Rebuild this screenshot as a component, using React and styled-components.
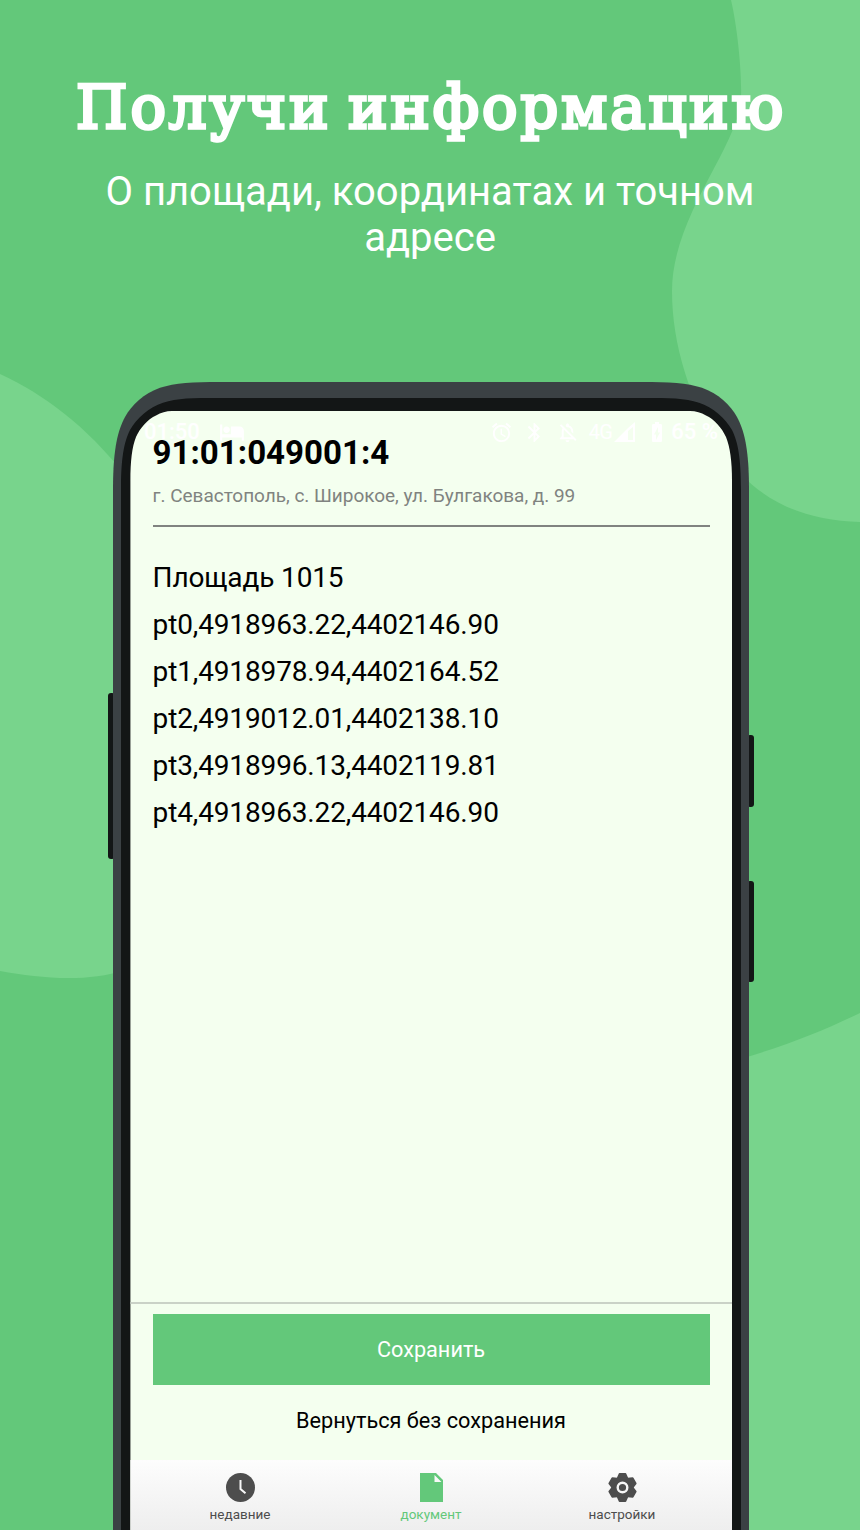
import React from "react";
import styled, { createGlobalStyle } from "styled-components";
import { MdAlarm, MdBluetooth, MdOutlineNotificationsOff, MdBatteryChargingFull, MdHotel } from "react-icons/md";

const Global = createGlobalStyle`
  * { box-sizing: border-box; }
  html, body { margin: 0; padding: 0; }
  body { width: 860px; height: 1530px; overflow: hidden; }
`;

const Poster = styled.main`
  position: relative;
  width: 860px;
  height: 1530px;
  overflow: hidden;
  display: flex;
  flex-direction: column;
  align-items: center;
  background: #63c87a;
  font-family: Roboto, sans-serif;
`;

const Waves = styled.svg`
  position: absolute;
  inset: 0;
`;

const Heading = styled.header`
  position: relative;
  height: 382px;
  padding-top: 70px;
  color: #fff;
  text-align: center;
`;

const Title = styled.h1`
  margin: 0 -2px 0 0;
  height: 99px;
  font: normal 59px/76px "DejaVu Serif", serif;
  letter-spacing: 3px;
  word-spacing: -5px;
  -webkit-text-stroke: 3.4px #fff;
  white-space: nowrap;
`;

const Subtitle = styled.p`
  margin: 0;
  font-size: 40px;
  line-height: 46px;
  white-space: nowrap;
`;

const Device = styled.section`
  position: relative;
  width: 636px;
  height: 1148px;
  margin-left: 2px;
`;

const SideKey = styled.i`
  position: absolute;
  width: 7px;
  background: #131616;
  border-radius: 3px;
  top: ${(p) => p.$top}px;
  height: ${(p) => p.$height}px;
  ${(p) => p.$side}: -5px;
`;

const Shell = styled.div`
  position: relative;
  height: 1148px;
  padding: 16px 8px 0;
  background: #3b4144;
  clip-path: path("M0 1148V107C0 66 5 48 12 35C18.5 23 31 11.5 47 5.8C62 1 80 0 107 0H529C556 0 574 1 589 5.8C605 11.5 617.5 23 624 35C631 48 636 66 636 107V1148Z");
`;

const Bezel = styled.div`
  height: 1132px;
  padding: 13px 9px 0;
  background: #131616;
  clip-path: path("M0 1132V92C0 60 3 44 9 32C15.5 20.5 28 9 42 4.7C56 0 72 0 97 0H523C548 0 564 0 578 4.7C592 9 604.5 20.5 611 32C617 44 620 60 620 92V1132Z");
`;

const Screen = styled.div`
  width: 602px;
  height: 1119px;
  display: flex;
  flex-direction: column;
  background: #f4ffef;
  clip-path: path("M0.4 1119V70C0.4 50 2 36 6 26C10 17 18 8 26 4.5C31 1.5 36 0 42 0H560C566 0 571 1.5 576 4.5C584 8 592 17 596 26C600 36 602 50 602 70V1119Z");
`;

const StatusBar = styled.div`
  height: 22px;
  margin-top: 10px;
  padding: 0 14px;
  display: flex;
  align-items: center;
  color: #fff;
  font-size: 22px;
  font-weight: 500;
  line-height: 22px;
  svg { display: block; flex: none; }
`;

const StatusGroup = styled.div`
  display: flex;
  align-items: center;
  gap: ${(p) => p.$gap}px;
  margin-left: ${(p) => p.$start || "0"};
`;

const Network = styled.span`
  font-size: 20px;
  font-weight: 400;
  letter-spacing: -0.6px;
`;

const Record = styled.article`
  flex: 1;
  margin: 0 22.4px 0 22.6px;
`;

const CadastralNumber = styled.h2`
  margin: -10px 0 0;
  font-size: 33.1px;
  line-height: 40px;
  font-weight: 700;
`;

const Address = styled.p`
  margin: 11px 0 0;
  height: 43px;
  font-size: 19px;
  line-height: 24px;
  letter-spacing: -0.03px;
  color: #808380;
  border-bottom: 2px solid #808380;
`;

const Points = styled.ul`
  list-style: none;
  margin: 28.4px 0 0;
  padding: 0;
  font-size: 28px;
  line-height: 46.9px;
`;

const Point = styled.li`
  letter-spacing: -0.14px;
`;

const Actions = styled.div`
  height: 158px;
  padding: 10px 22.5px 0;
  border-top: 2px solid #cad2c7;
  text-align: center;
`;

const SaveButton = styled.button`
  display: block;
  width: 557px;
  height: 71px;
  padding: 0;
  border: 0;
  background: #63c87a;
  color: #fff;
  font: 21.7px Roboto, sans-serif;
`;

const BackButton = styled(SaveButton)`
  background: none;
  color: #000;
`;

const Tabs = styled.nav`
  height: 70px;
  display: grid;
  grid-template-columns: repeat(3, 191px);
  justify-content: center;
  background: linear-gradient(#fdfdfd, #eee);
`;

const Tab = styled.a`
  display: flex;
  flex-direction: column;
  align-items: center;
  padding-top: 13px;
  gap: 4px;
  color: ${(p) => (p.$active ? "#63c87a" : "#4d4d4d")};
  font-size: 13.5px;
  line-height: 17px;
`;

const points = [
  "Площадь 1015",
  "pt0,4918963.22,4402146.90",
  "pt1,4918978.94,4402164.52",
  "pt2,4919012.01,4402138.10",
  "pt3,4918996.13,4402119.81",
  "pt4,4918963.22,4402146.90",
];

const Gear = () => (
  <svg width="29" height="29" viewBox="-14.5 -14.5 29 29" fill="currentColor">
    <circle r="10.8" />
    {[0, 60, 120, 180, 240, 300].map((angle) => (
      <path
        key={angle}
        transform={`rotate(${angle})`}
        d="M-5 -9 -3 -13.5H3L5 -9Z"
        stroke="currentColor"
        strokeWidth="1.8"
        strokeLinejoin="round"
      />
    ))}
    <circle r="4.8" fill="none" stroke="#f6f6f6" strokeWidth="2.4" />
  </svg>
);

export default function App() {
  return (
    <Poster>
      <Global />
      <Waves width="860" height="1530" viewBox="0 0 860 1530" fill="#78d48c">
        <path d="M731 0C738 30 742 75 741 97C740 145 672 215 672 291C672 345 690 400 720 448C755 500 800 520 860 522V0Z" />
        <path d="M0 374C45 395 85 425 125 475V970C85 983 40 978 0 971Z" />
        <path d="M740 1059C785 1046 825 1030 860 1013V1530H740Z" />
      </Waves>
      <Heading>
        <Title>Получи информацию</Title>
        <Subtitle>О площади, координатах и точном<br />адресе</Subtitle>
      </Heading>
      <Device>
        <SideKey $side="left" $top={311} $height={166} />
        <SideKey $side="right" $top={353} $height={72} />
        <SideKey $side="right" $top={499} $height={101} />
        <Shell>
          <Bezel>
            <Screen>
              <StatusBar>
                <StatusGroup $gap={19}>01:50<MdHotel size={26} /></StatusGroup>
                <StatusGroup $gap={10} $start="auto">
                  <MdAlarm size={23} />
                  <MdBluetooth size={23} />
                  <MdOutlineNotificationsOff size={23} />
                  <StatusGroup $gap={2}>
                    <Network>4G</Network>
                    <svg width="21" height="20" fill="#fff"><path d="M0 20 14 6V20ZM14 6 21 0V20H14V18H19V5L14 9Z" /></svg>
                  </StatusGroup>
                  <StatusGroup $gap={2}><MdBatteryChargingFull size={24} />65 %</StatusGroup>
                </StatusGroup>
              </StatusBar>
              <Record>
                <CadastralNumber>91:01:049001:4</CadastralNumber>
                <Address>г. Севастополь, с. Широкое, ул. Булгакова, д. 99</Address>
                <Points>
                  {points.map((text, i) => <Point key={i}>{text}</Point>)}
                </Points>
              </Record>
              <Actions>
                <SaveButton>Сохранить</SaveButton>
                <BackButton>Вернуться без сохранения</BackButton>
              </Actions>
              <Tabs>
                <Tab>
                  <svg width="29" height="29" viewBox="0 0 29 29"><circle cx="14.5" cy="14.5" r="14.5" fill="currentColor" /><path d="M14.5 7V16L19.5 20.3" fill="none" stroke="#f8f8f8" strokeWidth="2" /></svg>
                  недавние
                </Tab>
                <Tab $active>
                  <svg width="23" height="29" viewBox="0 0 23 29"><path fill="currentColor" fillRule="evenodd" d="M0 0H16L23 7V29H0ZM14.5 2V9H21.5Z" /></svg>
                  документ
                </Tab>
                <Tab><Gear />настройки</Tab>
              </Tabs>
            </Screen>
          </Bezel>
        </Shell>
      </Device>
    </Poster>
  );
}
